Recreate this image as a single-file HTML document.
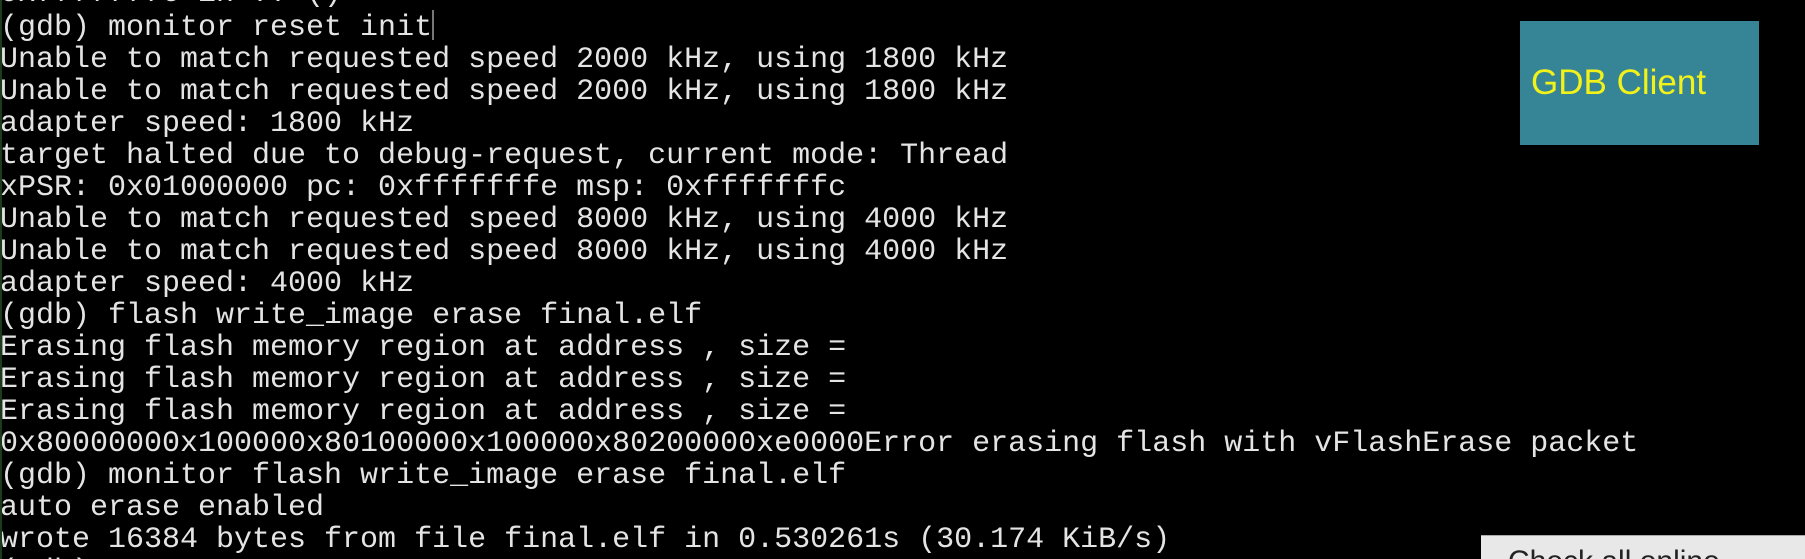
<!DOCTYPE html>
<html><head><meta charset="utf-8"><style>
html,body{margin:0;padding:0;background:#000;width:1805px;height:559px;overflow:hidden;position:relative}
pre{position:absolute;left:0;top:-22px;height:581px;overflow:hidden;margin:0;font-family:"Liberation Mono",monospace;font-size:30px;line-height:32px;color:#e4e4e4;white-space:pre}
.cur{display:inline-block;width:2px;height:30px;background:#777;vertical-align:-5px}
.box{position:absolute;left:1520px;top:21px;width:239px;height:124px;background:#358596}
.box span{position:absolute;left:11px;top:42px;font-family:"Liberation Sans",sans-serif;font-size:35px;color:#f2f21a;line-height:40px}
.pop{position:absolute;left:1481px;top:535px;width:324px;height:24px;background:#e8e8e8;border-top:1px solid #aaa;overflow:hidden}
.pop span{position:absolute;left:27px;top:9px;font-family:"Liberation Sans",sans-serif;font-size:30px;line-height:34px;color:#222}
.edge{position:absolute;left:0;top:0;width:2px;height:559px;background:#1c3a1c}
</style></head><body>
<pre>0xfffffffe in ?? ()
(gdb) monitor reset init<span class="cur"></span>
Unable to match requested speed 2000 kHz, using 1800 kHz
Unable to match requested speed 2000 kHz, using 1800 kHz
adapter speed: 1800 kHz
target halted due to debug-request, current mode: Thread
xPSR: 0x01000000 pc: 0xfffffffe msp: 0xfffffffc
Unable to match requested speed 8000 kHz, using 4000 kHz
Unable to match requested speed 8000 kHz, using 4000 kHz
adapter speed: 4000 kHz
(gdb) flash write_image erase final.elf
Erasing flash memory region at address , size =
Erasing flash memory region at address , size =
Erasing flash memory region at address , size =
0x80000000x100000x80100000x100000x80200000xe0000Error erasing flash with vFlashErase packet
(gdb) monitor flash write_image erase final.elf
auto erase enabled
wrote 16384 bytes from file final.elf in 0.530261s (30.174 KiB/s)
(gdb) </pre>
<div class="edge"></div>
<div class="box"><span>GDB Client</span></div>
<div class="pop"><span>Check all online</span></div>
</body></html>
